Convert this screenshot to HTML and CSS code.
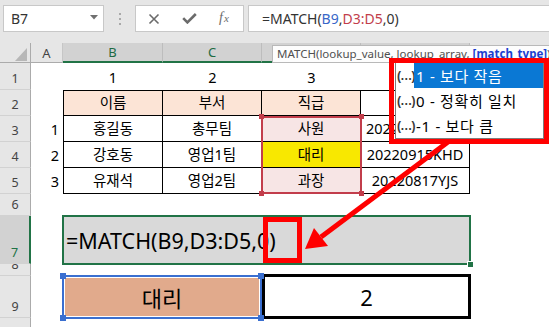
FILE: index.html
```html
<!DOCTYPE html>
<html lang="ko">
<head>
<meta charset="utf-8">
<title>MATCH</title>
<link rel="stylesheet" href="styles.css">
</head>
<body>
<div class="app">
  <div class="toolbar">
    <div class="namebox">
      <span class="nb-text">B7</span>
      <svg class="caret" width="8" height="5" viewBox="0 0 8 5"><path d="M0 0H8L4 4.5Z" fill="#707070"/></svg>
    </div>
    <div class="grip"><i></i><i></i><i></i></div>
    <div class="fxbox">
      <svg class="ic-x" width="12" height="12" viewBox="0 0 12 12"><path d="M1.5 1.5L10.5 10.5M10.5 1.5L1.5 10.5" stroke="#6b6b6b" stroke-width="1.6" fill="none"/></svg>
      <svg class="ic-ok" width="15" height="11" viewBox="0 0 15 11"><path d="M1.2 5.2L5.4 9.4L13.8 1" stroke="#6b6b6b" stroke-width="2.6" fill="none"/></svg>
      <span class="fx"><i>f</i><i class="fx-x">x</i></span>
    </div>
    <div class="formula">=MATCH(<span class="ref1">B9</span>,<span class="ref2">D3:D5</span>,0)</div>
  </div>

  <div class="sheet">
    <div class="corner"><svg width="31" height="20" viewBox="0 0 31 20"><path d="M15 18H27V5Z" fill="#b7b7b7"/></svg></div>
    <div class="ch">A</div>
    <div class="ch sel">B</div>
    <div class="ch sel">C</div>
    <div class="ch sel">D</div>
    <div class="ch sel">E</div>
    <div class="ch last"></div>

    <div class="rh">1</div>
    <div class="c"></div>
    <div class="c">1</div>
    <div class="c">2</div>
    <div class="c">3</div>

    <div class="rh">2</div>
    <div class="c"></div>
    <div class="c t top left hd">이름</div>
    <div class="c t top hd">부서</div>
    <div class="c t top hd">직급</div>
    <div class="c t top">사번</div>

    <div class="rh">3</div>
    <div class="c num">1</div>
    <div class="c t left">홍길동</div>
    <div class="c t">총무팀</div>
    <div class="c t pk">사원</div>
    <div class="c t">20220102HGD</div>

    <div class="rh">4</div>
    <div class="c num">2</div>
    <div class="c t left">강호동</div>
    <div class="c t">영업1팀</div>
    <div class="c t yl">대리</div>
    <div class="c t">20220915KHD</div>

    <div class="rh">5</div>
    <div class="c num">3</div>
    <div class="c t left">유재석</div>
    <div class="c t">영업2팀</div>
    <div class="c t pk">과장</div>
    <div class="c t">20220817YJS</div>

    <div class="rh">6</div>

    <div class="rh sel">7</div>
    <div class="c"></div>
    <div class="m7">=MATCH(B9,D3:D5,0)<span class="fill-handle"></span></div>

    <div class="rh">8</div>

    <div class="rh">9</div>
    <div class="c"></div>
    <div class="shape">대리<span class="sh tl"></span><span class="sh tr"></span><span class="sh bl"></span><span class="sh br"></span></div>
    <div class="box9">2</div>

    <div class="rh">10</div>
  </div>

  <div class="range"><span class="rg tl"></span><span class="rg tr"></span><span class="rg bl"></span><span class="rg br"></span></div>

  <svg class="arrow" width="549" height="327" viewBox="0 0 549 327">
    <line x1="452" y1="139" x2="321" y2="237" stroke="#ff0000" stroke-width="5"/>
    <polygon points="305,249 328,246 314,228" fill="#ff0000"/>
  </svg>

  <div class="redbox"></div>

  <div class="tip">MATCH(lookup_value, lookup_array, <b>[match_type]</b>)</div>

  <div class="ac">
    <div class="ac-item on"><span class="ac-ic">(…)</span><span class="ac-tx">1 - 보다 작음</span></div>
    <div class="ac-item"><span class="ac-ic">(…)</span><span class="ac-tx">0 - 정확히 일치</span></div>
    <div class="ac-item"><span class="ac-ic">(…)</span><span class="ac-tx">-1 - 보다 큼</span></div>
  </div>
  <div class="frame"></div>
</div>
</body>
</html>
```

FILE: styles.css
```css
html, body {
  margin: 0;
  padding: 0;
}
body {
  width: 549px;
  height: 327px;
  overflow: hidden;
  background: #ffffff;
  font-family: "Noto Sans", "Noto Sans CJK KR", sans-serif;
  color: #000;
}
.app {
  position: relative;
  width: 549px;
  height: 327px;
  overflow: hidden;
}

/* ---------- formula bar ---------- */
.toolbar {
  height: 43px;
  box-sizing: border-box;
  background: #e6e6e6;
  display: flex;
  align-items: flex-start;
  padding: 5px 0 0 3px;
}
.namebox {
  width: 101px;
  height: 27px;
  box-sizing: border-box;
  background: #fff;
  border: 1px solid #c8c8c8;
  display: flex;
  justify-content: space-between;
  align-items: flex-start;
  padding: 0 5px 0 7px;
}
.nb-text {
  font-size: 14px;
  line-height: 25px;
  color: #333;
}
.caret {
  margin-top: 9px;
}
.grip {
  width: 31px;
  display: flex;
  flex-direction: column;
  align-items: center;
  gap: 3px;
  padding-top: 8px;
}
.grip i {
  display: block;
  width: 2px;
  height: 2px;
  background: #a9a9a9;
}
.fxbox {
  width: 109px;
  height: 27px;
  box-sizing: border-box;
  background: #fff;
  border: 1px solid #c8c8c8;
  display: flex;
  align-items: center;
  padding-left: 12px;
  gap: 22px;
}
.fx {
  font-family: "Liberation Serif", serif;
  font-size: 14px;
  color: #6b6b6b;
  line-height: 1;
  margin-top: -2px;
}
.fx i {
  font-style: italic;
}
.fx-x {
  font-size: 11px;
  margin-left: 1px;
}
.formula {
  flex: 1;
  margin-left: 4px;
  height: 27px;
  box-sizing: border-box;
  background: #fff;
  border: 1px solid #c8c8c8;
  border-right: none;
  padding-left: 13px;
  font-size: 14px;
  line-height: 25px;
  color: #333;
  white-space: nowrap;
}
.ref1 { color: #3867c8; }
.ref2 { color: #c23d4b; }

/* ---------- sheet grid ---------- */
.sheet {
  display: grid;
  grid-template-columns: 31px 32px 100px 99px 99px 109px 1fr;
  grid-template-rows: 20px 27px 26px 26px 26px 26px 22px 48px 12px 42px 26px;
}
.corner {
  background: #e6e6e6;
  border-right: 1px solid #ababab;
  border-bottom: 1px solid #ababab;
  box-sizing: border-box;
  overflow: hidden;
}
.corner svg { display: block; }
.ch {
  background: #e6e6e6;
  border-right: 1px solid #c6c6c6;
  border-bottom: 1px solid #ababab;
  box-sizing: border-box;
  display: flex;
  align-items: center;
  justify-content: center;
  font-size: 13px;
  color: #444;
}
.ch.sel {
  background: #d2d2d2;
  color: #1e6b43;
  border-right-color: #bdbdbd;
  border-bottom: 2px solid #217346;
}
.ch.last { border-right: none; }
.rh {
  grid-column: 1;
  background: #e6e6e6;
  border-right: 1px solid #ababab;
  border-bottom: 1px solid #d2d2d2;
  box-sizing: border-box;
  display: flex;
  align-items: flex-end;
  justify-content: center;
  padding-bottom: 3px;
  font-size: 12.5px;
  line-height: 14px;
  color: #444;
  overflow: hidden;
}
.rh.sel {
  background: #d2d2d2;
  color: #217346;
  border-right: 2px solid #217346;
}

.c {
  display: flex;
  align-items: flex-end;
  justify-content: center;
  padding-bottom: 3px;
  box-sizing: border-box;
  font-size: 14.5px;
  line-height: 20px;
  white-space: nowrap;
  overflow: hidden;
}
.c.num {
  justify-content: flex-end;
  padding-right: 4px;
}
.t {
  border-right: 1px solid #000;
  border-bottom: 1px solid #000;
}
.t.top { border-top: 1px solid #000; }
.t.left { border-left: 1px solid #000; }
.hd { background: #fce4d6; }
.pk { background: #f7e5e5; }
.yl { background: #f8e800; }

.m7 {
  grid-column: span 4;
  margin: -1px;
  position: relative;
  background: #d9d9d9;
  border: 2px solid #217346;
  display: flex;
  align-items: center;
  padding-left: 2px;
  font-size: 21.5px;
  white-space: nowrap;
}
.fill-handle {
  position: absolute;
  right: -5px;
  bottom: -5px;
  width: 5px;
  height: 5px;
  background: #217346;
  border: 1px solid #fff;
}

.shape {
  grid-column: span 2;
  margin: -1px 0 -1px -1px;
  position: relative;
  z-index: 2;
  background: #e1aa8c;
  border: 2px solid #3a6fd0;
  box-shadow: inset 0 0 0 1px #fff;
  display: flex;
  align-items: center;
  justify-content: center;
  font-size: 22px;
}
.sh {
  position: absolute;
  width: 6px;
  height: 6px;
  background: #3a6fd0;
}
.sh.tl { left: -4px; top: -4px; }
.sh.tr { right: -4px; top: -4px; }
.sh.bl { left: -4px; bottom: -4px; }
.sh.br { right: -4px; bottom: -4px; }

.box9 {
  grid-column: span 2;
  margin: -2px -1px -1px 0;
  border: 3px solid #000;
  display: flex;
  align-items: center;
  justify-content: center;
  font-size: 22px;
}

/* ---------- overlays ---------- */
.range {
  position: absolute;
  left: 261px;
  top: 116px;
  width: 101px;
  height: 78px;
  box-sizing: border-box;
  border: 2px solid #c23d4b;
}
.rg {
  position: absolute;
  width: 5px;
  height: 5px;
  background: #c23d4b;
}
.rg.tl { left: -4px; top: -4px; }
.rg.tr { right: -4px; top: -4px; }
.rg.bl { left: -4px; bottom: -4px; }
.rg.br { right: -4px; bottom: -4px; }

.arrow {
  position: absolute;
  left: 0;
  top: 0;
}
.redbox {
  position: absolute;
  left: 263px;
  top: 217px;
  width: 39px;
  height: 46px;
  box-sizing: border-box;
  border: 5px solid #ff0000;
}

.tip {
  position: absolute;
  left: 272px;
  top: 45px;
  width: 290px;
  height: 18px;
  box-sizing: border-box;
  background: #fdfdfd;
  border: 1px solid #b9b9b9;
  padding-left: 4px;
  font-size: 11.5px;
  line-height: 16px;
  color: #505050;
  white-space: nowrap;
  overflow: hidden;
}
.tip b {
  color: #1b3fd0;
  text-decoration: underline;
}

.ac {
  position: absolute;
  left: 395px;
  top: 62px;
  width: 149px;
  height: 77px;
  box-sizing: border-box;
  background: #fff;
  border: 1px solid #7d7d7d;
}
.ac-item {
  height: 25px;
  display: flex;
  align-items: center;
}
.ac-ic {
  width: 18px;
  padding-left: 1px;
  box-sizing: border-box;
  font-family: "Liberation Sans", sans-serif;
  font-size: 12px;
  font-weight: bold;
  letter-spacing: -0.8px;
  color: #3a3a3a;
}
.ac-tx {
  flex: 1;
  height: 25px;
  display: flex;
  align-items: center;
  padding-left: 2px;
  font-size: 15px;
  letter-spacing: 0.7px;
  white-space: nowrap;
}
.ac-item.on .ac-tx {
  background: #0a78d4;
  color: #fff;
}
.frame {
  position: absolute;
  left: 389px;
  top: 58px;
  width: 160px;
  height: 86px;
  box-sizing: border-box;
  border: 5px solid #ff0000;
}
```
